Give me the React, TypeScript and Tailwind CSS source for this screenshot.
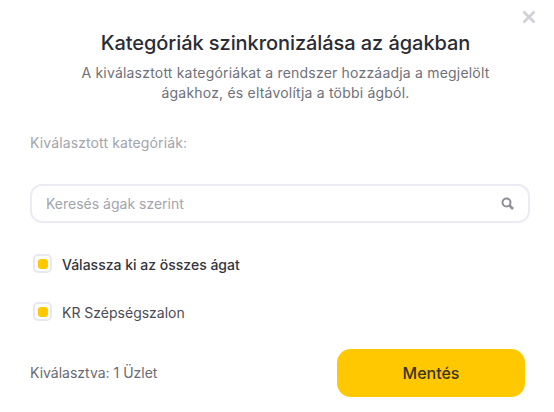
const Check = ({ label, bold }: { label: string; bold?: boolean }) => (
  <label className="flex items-center gap-[10px] pl-[3px]">
    <span className="mb-[2px] flex h-[19px] w-[19px] items-center justify-center rounded-[5px] border-2 border-[#e8e8f0] bg-white">
      <span className="h-[10px] w-[10px] rounded-[3px] bg-[#ffc800]" />
    </span>
    <span className={bold ? 'text-[14px] leading-[20px] font-medium text-[#33343c]' : 'text-[14px] leading-[20px] text-[#4b4c55]'}>
      {label}
    </span>
  </label>
);

export default function App() {
  return (
    <div className="relative flex h-[412px] w-[554px] flex-col bg-white pt-[31px] pl-[30px] pr-[25px] font-['Inter',sans-serif]">
      {/* Close */}
      <button className="absolute top-[10px] right-[18px] text-[#d0d0d6]">
        <svg width="14" height="14" viewBox="0 0 14 14" fill="none" stroke="currentColor" strokeWidth="2.6">
          <path d="M1.5 1.5 12.5 12.5M12.5 1.5 1.5 12.5" />
        </svg>
      </button>

      <div className="mr-[-12px] text-center">
        <h2 className="text-[20px] leading-[24px] font-medium tracking-[-0.07px] text-[#2b2c33]">Kategóriák szinkronizálása az ágakban</h2>
        <p className="mx-auto mt-[8px] w-[440px] text-[14px] leading-[20px] tracking-[0.2px] text-[#6f7079]">
          A kiválasztott kategóriákat a rendszer hozzáadja a megjelölt ágakhoz, és eltávolítja a többi ágból.
        </p>
      </div>

      <p className="mt-[30px] text-[14px] leading-[20px] tracking-[0.12px] text-[#a3a4ad]">Kiválasztott kategóriák:</p>

      <div className="mt-[31px] flex h-[39px] w-[500px] items-center justify-between rounded-[12px] border-2 border-[#ebebf4] bg-white pl-[14px] pr-[14px]">
        <span className="text-[14px] text-[#a3a4ad]">Keresés ágak szerint</span>
        <svg width="13" height="13" viewBox="0 0 13 13" fill="none" stroke="#8f9098">
          <circle cx="5.5" cy="5.5" r="4" strokeWidth="2" />
          <path d="M8.5 8.5 12 12" strokeWidth="2.6" />
        </svg>
      </div>

      <div className="mt-[31px] flex flex-col gap-[27px]">
        <Check label="Válassza ki az összes ágat" bold />
        <Check label="KR Szépségszalon" />
      </div>

      <div className="mt-[26px] flex items-center justify-between pr-[4px]">
        <span className="text-[14px] leading-[20px] text-[#6a6b74]">Kiválasztva: 1 Üzlet</span>
        <button className="h-[48px] w-[188px] rounded-[14px] bg-[#ffc800] text-[16px] font-medium text-[#3a3420]">Mentés</button>
      </div>
    </div>
  );
}
